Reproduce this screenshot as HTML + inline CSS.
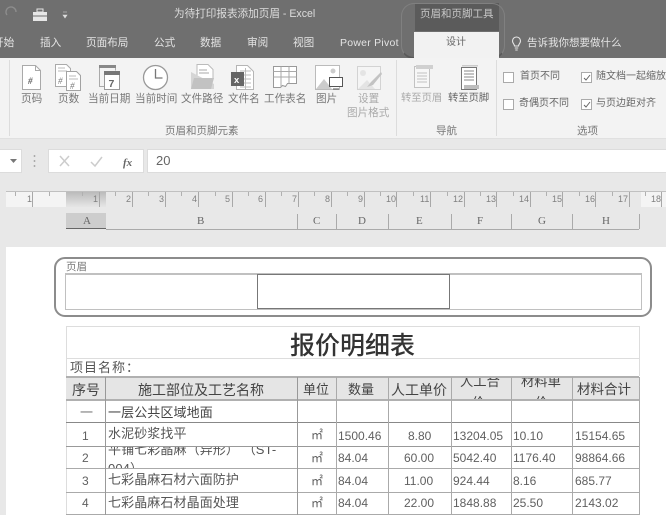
<!DOCTYPE html>
<html><head><meta charset="utf-8">
<style>
html,body{margin:0;padding:0;}
body{width:666px;height:515px;overflow:hidden;position:relative;background:#e8e8e8;font-family:"Liberation Sans","Noto Sans CJK SC",sans-serif;color:#555;}
div{position:absolute;box-sizing:border-box;}
#w{left:0;top:0;width:666px;height:515px;overflow:hidden;filter:blur(.35px);}
.t{white-space:nowrap;line-height:1;}
.tab{top:36px;font-size:10.6px;color:#e4e4e4;white-space:nowrap;line-height:14px;}
.lb{top:93px;font-size:10.6px;color:#777;white-space:nowrap;line-height:12px;}
.opt{font-size:10px;}
.cell{font-size:12px;color:#606060;white-space:nowrap;line-height:14px;}
.zh{font-size:13px;letter-spacing:.1px;color:#555;}
.hd{font-size:13.5px;color:#444;}
.col{top:215px;font-family:"Liberation Serif",serif;font-size:11px;color:#666;line-height:12px;}
.rn{top:194px;font-size:9px;color:#808080;line-height:10px;}
.v{background:#aaa;width:1px;}
.h{height:1px;}
.cb{width:11px;height:11px;background:#fff;border:1px solid #aaa;}
svg{position:absolute;overflow:visible;}
</style></head><body><div id="w">
<!-- title -->
<div style="left:0;top:0;width:666px;height:58px;background:#6f6f6f"></div>
<svg style="left:0;top:0" width="90" height="30"><path d="M7 15a5 5 0 1 1 9-3" fill="none" stroke="#8d8d8d" stroke-width="1.4"/><rect x="33" y="12" width="14" height="9" fill="#e6e6e6"/><rect x="37" y="9" width="6" height="3" fill="none" stroke="#e6e6e6"/><rect x="33" y="15.5" width="14" height="1" fill="#6f6f6f"/><path d="M63 12h4M63 15h4l-2 3z" fill="#ddd" stroke="#ddd" stroke-width=".6"/></svg>
<div class="t" style="left:174px;top:9px;font-size:10.6px;color:#ddd">为待打印报表添加页眉 - Excel</div>
<div style="left:415px;top:3px;width:84px;height:28px;background:#5b5b5b"></div>
<div class="t" style="left:420px;top:9px;font-size:10.5px;color:#c8c8c8">页眉和页脚工具</div>
<div style="left:401px;top:3px;width:104px;height:56px;border:1px solid #808080;border-bottom:2px solid #5a5a5a;border-radius:13px"></div>
<div style="left:414px;top:32px;width:85px;height:26px;background:#f2f2f2"></div>
<div class="t" style="left:446px;top:38px;font-size:10px;color:#666">设计</div>
<div class="tab" style="left:-7px">开始</div>
<div class="tab" style="left:40px">插入</div>
<div class="tab" style="left:86px">页面布局</div>
<div class="tab" style="left:154px">公式</div>
<div class="tab" style="left:200px">数据</div>
<div class="tab" style="left:247px">审阅</div>
<div class="tab" style="left:293px">视图</div>
<div class="tab" style="left:340px;font-size:10.5px;letter-spacing:.25px">Power Pivot</div>
<svg style="left:510px;top:36px" width="14" height="16"><path d="M4.5 10c0-2-2-2.500-2-5a4 4 0 0 1 8 0c0 2.500-2 3-2 5z" fill="none" stroke="#e6e6e6" stroke-width="1.1"/><path d="M4.800 12h3.400M5.300 14h2.400" stroke="#e6e6e6"/></svg>
<div class="tab" style="left:527px;font-size:10.500px">告诉我你想要做什么</div>
<!-- ribbon -->
<div style="left:0;top:58px;width:666px;height:81px;background:#f3f3f3"></div>
<div class="v" style="left:9px;top:60px;height:76px;background:#dcdcdc"></div>
<div class="v" style="left:396px;top:60px;height:76px;background:#dcdcdc"></div>
<div class="v" style="left:496px;top:60px;height:76px;background:#dcdcdc"></div>
<div class="h" style="left:0;top:138px;width:666px;background:#e0e0e0"></div>
<svg style="left:0;top:58px" width="500" height="40" fill="none">
<path d="M22.500 7.500h13l5 5v19h-18z" fill="#fff" stroke="#a9a9a9"/><path d="M35.500 7.500v5h5" stroke="#a9a9a9"/><text x="28" y="26" font-family="Liberation Serif" font-style="italic" font-weight="bold" font-size="9" fill="#666">#</text>
<path d="M55.500 6.500h11l4 4v18h-15z" fill="#fff" stroke="#aaa"/><path d="M58 10h7M58 13h9" stroke="#bbb"/><text x="58" y="26" font-family="Liberation Serif" font-style="italic" font-size="9" fill="#777">#</text>
<path d="M66.500 13.500h10l4 4v15h-14z" fill="#fff" stroke="#a2a2a2"/><path d="M69 18h7M69 21h9" stroke="#bbb"/><text x="70" y="31" font-family="Liberation Serif" font-style="italic" font-size="9" fill="#777">#</text>
<path d="M99.500 7.500h16v5M99.500 7.500v21h5" stroke="#aaa"/><rect x="99" y="7" width="17" height="3" fill="#888"/>
<rect x="104.500" y="13.500" width="15" height="18" fill="#fff" stroke="#999"/><rect x="104" y="13" width="16" height="4" fill="#777"/><text x="108.500" y="29" font-family="Liberation Sans" font-weight="bold" font-size="10.500" fill="#666">7</text>
<circle cx="155.500" cy="19.500" r="12" fill="#fff" stroke="#999" stroke-width="1.300"/><path d="M155.500 11v9h7" stroke="#777" stroke-width="1.300"/>
<path d="M197 6.500h11l5 5v10h-16z" fill="#fff" stroke="#bbb"/><path d="M199 12h8M199 15h10" stroke="#aaa"/>
<path d="M191 14v17h23v-5z" fill="#d5d5d5"/><path d="M191 31l3-11h20l-3 11z" fill="#c2c2c2"/>
<path d="M236.500 7.500h11l6 6v18h-17z" fill="#fff" stroke="#b5b5b5"/><path d="M240 13h11M240 17h11M240 21h11M240 25h11M240 29h11M245.500 10v21" stroke="#bbb"/><rect x="231" y="14" width="13" height="14" fill="#666"/><text x="234" y="25" font-family="Liberation Sans" font-weight="bold" font-size="9.500" fill="#fff">x</text>
<path d="M273.500 8.500h23v17h-9l-2 3-3-1-2 2h-7z" fill="#fff" stroke="#999"/><path d="M273.500 13.500h23M273.500 19h23M281 8.500v21M289 8.500v17" stroke="#aaa"/>
<rect x="315.500" y="7.500" width="24" height="24" fill="#fff" stroke="#bbb"/><path d="M316 31l8-10 8 10z" fill="#ccc"/><circle cx="333" cy="13" r="2.500" fill="#ccc"/><rect x="329.500" y="19.500" width="13" height="9" fill="#fff" stroke="#555"/><path d="M333 31h6" stroke="#555"/>
<g opacity=".65"><rect x="357.500" y="8.500" width="23" height="23" fill="#f7f7f7" stroke="#c2c2c2"/><path d="M358 31l9-9 8 9z" fill="#ddd"/><path d="M367 29l4-5 10-10 1 2-9 11z" fill="#aaa"/><circle cx="363" cy="15" r="3" fill="#ddd"/></g>
<g stroke="#c2c2c2"><rect x="414.500" y="8.500" width="15" height="21" fill="#f7f7f7"/><path d="M417 15h10M417 18h10M417 21h10M417 24h10"/></g><rect x="416" y="7" width="17" height="4" fill="#d0d0d0"/>
<rect x="461.500" y="9.500" width="15" height="22" fill="#fff" stroke="#777"/><path d="M464 13h10M464 16h10M464 19h10M464 22h10" stroke="#888"/><rect x="464" y="27" width="15" height="4" fill="#bdbdbd"/><rect x="462" y="7" width="16" height="1.500" fill="#ccc"/>
</svg>
<div class="lb" style="left:21px">页码</div>
<div class="lb" style="left:58px">页数</div>
<div class="lb" style="left:88px">当前日期</div>
<div class="lb" style="left:135px">当前时间</div>
<div class="lb" style="left:181px">文件路径</div>
<div class="lb" style="left:228px">文件名</div>
<div class="lb" style="left:264px">工作表名</div>
<div class="lb" style="left:316px">图片</div>
<div class="lb" style="left:358px;color:#aaa">设置</div>
<div class="lb" style="left:347px;top:107px;color:#aaa">图片格式</div>
<div class="lb" style="left:401px;font-size:10.300px;color:#aaa">转至页眉</div>
<div class="lb" style="left:448px;font-size:10.300px;color:#666">转至页脚</div>
<div class="lb" style="left:165px;top:125px;font-size:10.500px">页眉和页脚元素</div>
<div class="lb" style="left:436px;top:125px;font-size:10.500px">导航</div>
<div class="lb" style="left:577px;top:125px;font-size:10.500px">选项</div>
<div class="cb" style="left:503px;top:72px"></div>
<div class="cb" style="left:503px;top:99px"></div>
<div class="cb" style="left:581px;top:72px"></div>
<div class="cb" style="left:581px;top:99px"></div>
<svg style="left:581px;top:72px" width="11" height="40" fill="none" stroke="#666"><path d="M3 6l2 2 4-5M3 33l2 2 4-5"/></svg>
<div class="lb opt" style="left:520px;top:71px;color:#666">首页不同</div>
<div class="lb opt" style="left:519px;top:98px;color:#666">奇偶页不同</div>
<div class="lb opt" style="left:596px;top:71px;color:#666">随文档一起缩放</div>
<div class="lb opt" style="left:596px;top:98px;color:#666">与页边距对齐</div>
<!-- formula bar -->
<div style="left:0;top:149px;width:22px;height:24px;background:#fff;border:1px solid #dcdcdc;border-left:0"></div>
<svg style="left:10px;top:158px" width="8" height="6"><path d="M0 1h7l-3.500 4z" fill="#777"/></svg>
<svg style="left:33px;top:154px" width="4" height="16"><path d="M1.500 1v2M1.500 6v2M1.500 11v2" stroke="#aaa" stroke-width="1.500"/></svg>
<div style="left:48px;top:149px;width:96px;height:24px;background:#fff;border:1px solid #dcdcdc"></div>
<svg style="left:48px;top:149px" width="96" height="24" fill="none"><path d="M12 7l9 10M21 7l-9 10" stroke="#ccc" stroke-width="1.500"/><path d="M43 13l4 4 7-9" stroke="#ccc" stroke-width="1.500"/><text x="75" y="17" font-family="Liberation Serif" font-style="italic" font-weight="bold" font-size="11" fill="#666" stroke="none">fx</text></svg>
<div style="left:147px;top:149px;width:519px;height:24px;background:#fff;border-top:1px solid #dcdcdc;border-bottom:1px solid #dcdcdc;border-left:1px solid #dcdcdc"></div>
<div class="t" style="left:156px;top:154px;font-size:13px;color:#666">20</div>
<!-- ruler -->
<div style="left:6px;top:191px;width:60px;height:16px;background:#f4f4f4"></div>
<div style="left:66px;top:191px;width:40px;height:16px;background:linear-gradient(#b8b8b8,#e6e6e6)"></div>
<div style="left:641px;top:191px;width:25px;height:16px;background:#f4f4f4"></div>
<div class="h" style="left:6px;top:191px;width:660px;background:#c0c0c0"></div>
<svg style="left:0;top:191px" width="666" height="17" stroke="#a8a8a8" fill="none"><path d="M32.500 1v15M99.500 1v15M132.500 1v15M165.500 1v15M198.500 1v15M232.500 1v15M265.500 1v15M298.500 1v15M331.500 1v15M364.500 1v15M396.500 1v15M430.500 1v15M464.500 1v15M496.500 1v15M530.500 1v15M562.500 1v15M595.500 1v15M629.500 1v15M661.500 1v15"/><path d="M15.500 1v4M49.500 1v4M82.500 1v4M115.500 1v4M148.500 1v4M181.500 1v4M215.500 1v4M248.500 1v4M281.500 1v4M314.500 1v4M347.500 1v4M380.500 1v4M413.500 1v4M447.500 1v4M480.500 1v4M513.500 1v4M546.500 1v4M579.500 1v4M612.500 1v4M645.500 1v4" stroke="#b0b0b0"/></svg>
<div class="rn" style="left:27px">1</div><div class="rn" style="left:93px">1</div><div class="rn" style="left:126px">2</div><div class="rn" style="left:159px">3</div><div class="rn" style="left:192px">4</div><div class="rn" style="left:225px">5</div><div class="rn" style="left:258px">6</div><div class="rn" style="left:292px">7</div><div class="rn" style="left:325px">8</div><div class="rn" style="left:358px">9</div><div class="rn" style="left:386px">10</div><div class="rn" style="left:420px">11</div><div class="rn" style="left:453px">12</div><div class="rn" style="left:486px">13</div><div class="rn" style="left:519px">14</div><div class="rn" style="left:552px">15</div><div class="rn" style="left:585px">16</div><div class="rn" style="left:618px">17</div><div class="rn" style="left:651px">18</div>
<!-- col headers -->
<div style="left:66px;top:213px;width:40px;height:16px;background:#cdcdcd;border-bottom:1px solid #666"></div>
<div class="h" style="left:106px;top:229px;width:533px;background:#aaa"></div>
<div class="v" style="left:297px;top:214px;height:15px;"></div><div class="v" style="left:336px;top:214px;height:15px;"></div><div class="v" style="left:388px;top:214px;height:15px;"></div><div class="v" style="left:451px;top:214px;height:15px;"></div><div class="v" style="left:511px;top:214px;height:15px;"></div><div class="v" style="left:572px;top:214px;height:15px;"></div><div class="v" style="left:639px;top:214px;height:15px;"></div>
<div class="col" style="left:83px">A</div><div class="col" style="left:197px">B</div><div class="col" style="left:313px">C</div><div class="col" style="left:358px">D</div><div class="col" style="left:416px">E</div><div class="col" style="left:477px">F</div><div class="col" style="left:538px">G</div><div class="col" style="left:602px">H</div>
<!-- page -->
<div style="left:6px;top:247px;width:660px;height:268px;background:#fff"></div>
<div style="left:54px;top:257px;width:598px;height:60px;border:2px solid #8c8c8c;border-radius:11px"></div>
<div class="t" style="left:66px;top:262px;font-size:10.500px;color:#777">页眉</div>
<div style="left:65px;top:273px;width:577px;height:37px;border:1px solid #c0c0c0;border-top-width:2px"></div>
<div style="left:257px;top:274px;width:193px;height:35px;border:1px solid #777;border-left-width:1.500px;border-right-width:1.500px"></div>
<!-- table -->
<div class="h" style="left:66px;top:326px;width:573px;background:#ddd"></div>
<div class="v" style="left:66px;top:326px;height:189px;background:#ddd"></div>
<div class="v" style="left:639px;top:326px;height:50px;background:#ddd"></div>
<div class="t" style="left:290px;top:332px;font-size:25px;color:#333;font-weight:500;font-family:'Noto Sans CJK SC',sans-serif">报价明细表</div>
<div class="h" style="left:66px;top:358px;width:573px;background:#ddd"></div>
<div class="cell" style="left:70px;top:361px;font-size:13px;letter-spacing:1px;color:#555">项目名称：</div>
<div style="left:66px;top:377px;width:573px;height:24px;background:#e5e5e5"></div>
<div class="h" style="left:66px;top:376px;width:573px;height:2px;background:#b0b0b0"></div>
<div class="h" style="left:66px;top:399px;width:573px;height:2px;background:#b0b0b0"></div>
<div class="h" style="left:66px;top:422px;width:573px;background:#888"></div>
<div class="h" style="left:66px;top:446px;width:573px;background:#999"></div>
<div class="h" style="left:66px;top:468px;width:573px;background:#aaa"></div>
<div class="h" style="left:66px;top:492px;width:573px;background:#aaa"></div>
<div class="h" style="left:66px;top:514px;width:573px;background:#aaa"></div>
<div class="v" style="left:105px;top:377px;height:138px;background:#999"></div><div class="v" style="left:297px;top:377px;height:138px;background:#999"></div><div class="v" style="left:336px;top:377px;height:138px;background:#aaa"></div><div class="v" style="left:388px;top:377px;height:138px;background:#aaa"></div><div class="v" style="left:451px;top:377px;height:138px;background:#aaa"></div><div class="v" style="left:511px;top:377px;height:138px;background:#aaa"></div><div class="v" style="left:572px;top:377px;height:138px;background:#aaa"></div><div class="v" style="left:639px;top:377px;height:138px;background:#aaa"></div>
<div class="cell hd" style="left:72px;top:383px;font-size:14px">序号</div>
<div class="cell hd" style="left:138px;top:383px;font-size:14px">施工部位及工艺名称</div>
<div class="cell hd" style="left:303px;top:383px;font-size:13px">单位</div>
<div class="cell hd" style="left:348px;top:383px;font-size:13px">数量</div>
<div class="cell hd" style="left:391px;top:383px;font-size:14px">人工单价</div>
<div style="left:452px;top:378px;width:59px;height:21px;overflow:hidden"><div class="cell hd" style="left:8px;top:-3px;font-size:13.300px">人工合</div><div class="cell hd" style="left:20px;top:18px;font-size:13px">价</div></div>
<div style="left:512px;top:378px;width:60px;height:21px;overflow:hidden"><div class="cell hd" style="left:9px;top:-3px;font-size:13.300px">材料单</div><div class="cell hd" style="left:23px;top:18px;font-size:13px">价</div></div>
<div class="cell hd" style="left:577px;top:383px">材料合计</div>
<div class="cell zh" style="left:80px;top:406px;color:#777">一</div>
<div class="cell zh" style="left:108px;top:406px;color:#444">一层公共区域地面</div>
<div class="cell" style="left:82px;top:429px">1</div>
<div class="cell zh" style="left:108px;top:427px">水泥砂浆找平</div>
<div class="cell" style="left:82px;top:451px">2</div>
<div style="left:106px;top:447px;width:190px;height:21px;overflow:hidden"><div class="cell zh" style="left:2px;top:-4px">平铺七彩晶麻（异形） （ST-</div><div class="cell zh" style="left:2px;top:15px">004）</div></div>
<div class="cell" style="left:82px;top:474px">3</div>
<div class="cell zh" style="left:108px;top:473px">七彩晶麻石材六面防护</div>
<div class="cell" style="left:82px;top:496px">4</div>
<div class="cell zh" style="left:108px;top:496px">七彩晶麻石材晶面处理</div>
<div class="cell" style="left:311px;top:428px">㎡</div><div class="cell" style="left:311px;top:451px">㎡</div><div class="cell" style="left:311px;top:474px">㎡</div><div class="cell" style="left:311px;top:496px">㎡</div>
<div class="cell" style="left:338px;top:429px">1500.46</div><div class="cell" style="left:338px;top:451px">84.04</div><div class="cell" style="left:338px;top:474px">84.04</div><div class="cell" style="left:338px;top:496px">84.04</div>
<div class="cell" style="left:408px;top:429px">8.80</div><div class="cell" style="left:404px;top:451px">60.00</div><div class="cell" style="left:404px;top:474px">11.00</div><div class="cell" style="left:404px;top:496px">22.00</div>
<div class="cell" style="left:453px;top:429px">13204.05</div><div class="cell" style="left:453px;top:451px">5042.40</div><div class="cell" style="left:453px;top:474px">924.44</div><div class="cell" style="left:453px;top:496px">1848.88</div>
<div class="cell" style="left:513px;top:429px">10.10</div><div class="cell" style="left:513px;top:451px">1176.40</div><div class="cell" style="left:513px;top:474px">8.16</div><div class="cell" style="left:513px;top:496px">25.50</div>
<div class="cell" style="left:575px;top:429px">15154.65</div><div class="cell" style="left:575px;top:451px">98864.66</div><div class="cell" style="left:575px;top:474px">685.77</div><div class="cell" style="left:575px;top:496px">2143.02</div>
</div></body></html>
